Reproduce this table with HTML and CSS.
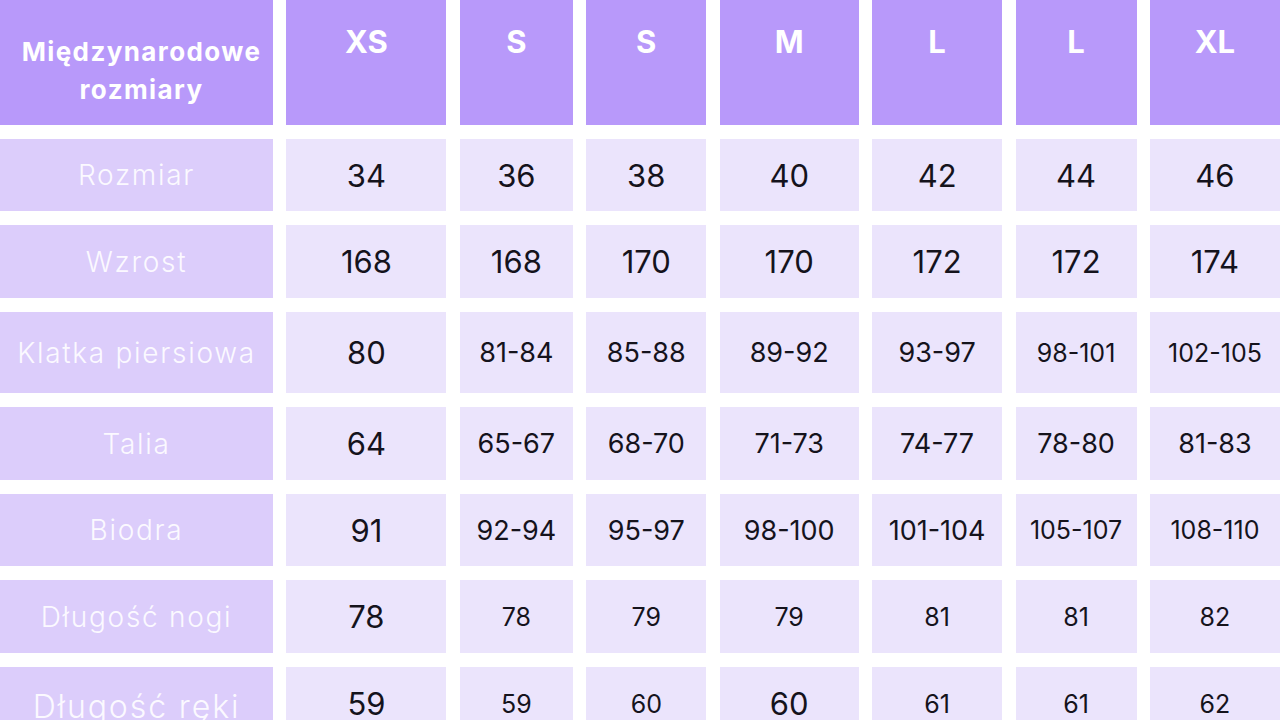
FILE: index.html
```html
<!DOCTYPE html>
<html lang="pl">
<head>
<meta charset="utf-8">
<title>Tabela rozmiarów</title>
<link rel="stylesheet" href="styles.css">
</head>
<body>
<div class="chart">
  <div class="cell head label-head">Międzynarodowe<br>rozmiary</div>
  <div class="cell head">XS</div>
  <div class="cell head">S</div>
  <div class="cell head">S</div>
  <div class="cell head">M</div>
  <div class="cell head">L</div>
  <div class="cell head">L</div>
  <div class="cell head">XL</div>

  <div class="cell label">Rozmiar</div>
  <div class="cell val big">34</div>
  <div class="cell val big">36</div>
  <div class="cell val big">38</div>
  <div class="cell val big">40</div>
  <div class="cell val big">42</div>
  <div class="cell val big">44</div>
  <div class="cell val big">46</div>

  <div class="cell label">Wzrost</div>
  <div class="cell val big">168</div>
  <div class="cell val big">168</div>
  <div class="cell val big">170</div>
  <div class="cell val big">170</div>
  <div class="cell val big">172</div>
  <div class="cell val big">172</div>
  <div class="cell val big">174</div>

  <div class="cell label">Klatka piersiowa</div>
  <div class="cell val big">80</div>
  <div class="cell val mid">81-84</div>
  <div class="cell val mid">85-88</div>
  <div class="cell val mid">89-92</div>
  <div class="cell val mid">93-97</div>
  <div class="cell val small">98-101</div>
  <div class="cell val small">102-105</div>

  <div class="cell label">Talia</div>
  <div class="cell val big">64</div>
  <div class="cell val mid">65-67</div>
  <div class="cell val mid">68-70</div>
  <div class="cell val mid">71-73</div>
  <div class="cell val mid">74-77</div>
  <div class="cell val mid">78-80</div>
  <div class="cell val mid">81-83</div>

  <div class="cell label">Biodra</div>
  <div class="cell val big">91</div>
  <div class="cell val mid">92-94</div>
  <div class="cell val mid">95-97</div>
  <div class="cell val mid">98-100</div>
  <div class="cell val mid">101-104</div>
  <div class="cell val small">105-107</div>
  <div class="cell val small">108-110</div>

  <div class="cell label">Długość nogi</div>
  <div class="cell val big">78</div>
  <div class="cell val small">78</div>
  <div class="cell val small">79</div>
  <div class="cell val small">79</div>
  <div class="cell val small">81</div>
  <div class="cell val small">81</div>
  <div class="cell val small">82</div>

  <div class="cell label label-lg">Długość ręki</div>
  <div class="cell val big">59</div>
  <div class="cell val small">59</div>
  <div class="cell val small">60</div>
  <div class="cell val big">60</div>
  <div class="cell val small">61</div>
  <div class="cell val small">61</div>
  <div class="cell val small">62</div>
</div>
</body>
</html>
```

FILE: styles.css
```css
html, body {
  margin: 0;
  padding: 0;
  background: #ffffff;
  width: 1280px;
  height: 720px;
  overflow: hidden;
}

.chart {
  display: grid;
  grid-template-columns: 273px 160px 113px 120px 139px 130px 121px 130px;
  grid-template-rows: 125px 72px 73px 81px 73px 72px 73px 73px;
  column-gap: 13.43px;
  row-gap: 14px;
  font-family: Inter, "Noto Sans", sans-serif;
}

.cell {
  display: flex;
  align-items: center;
  justify-content: center;
  text-align: center;
  white-space: nowrap;
}

.head {
  align-items: flex-start;
  background: #b899fa;
  color: #ffffff;
  font-weight: 700;
  font-size: 31px;
  line-height: 38px;
  padding-top: 23px;
  box-sizing: border-box;
}

.label-head {
  font-size: 26px;
  line-height: 38px;
  padding-top: 33px;
  padding-left: 10px;
  letter-spacing: 1.4px;
}

.label {
  background: #dccdfb;
  color: #fbf9ff;
  font-weight: 300;
  font-size: 28px;
  letter-spacing: 1.7px;
}

.label-lg {
  font-size: 32px;
  letter-spacing: 1.9px;
  padding-top: 6px;
  box-sizing: border-box;
}

.val {
  background: #ebe4fc;
  color: #15131c;
  font-weight: 400;
}

.big { font-size: 31px; }
.mid { font-size: 27px; }
.small { font-size: 25px; }
```
